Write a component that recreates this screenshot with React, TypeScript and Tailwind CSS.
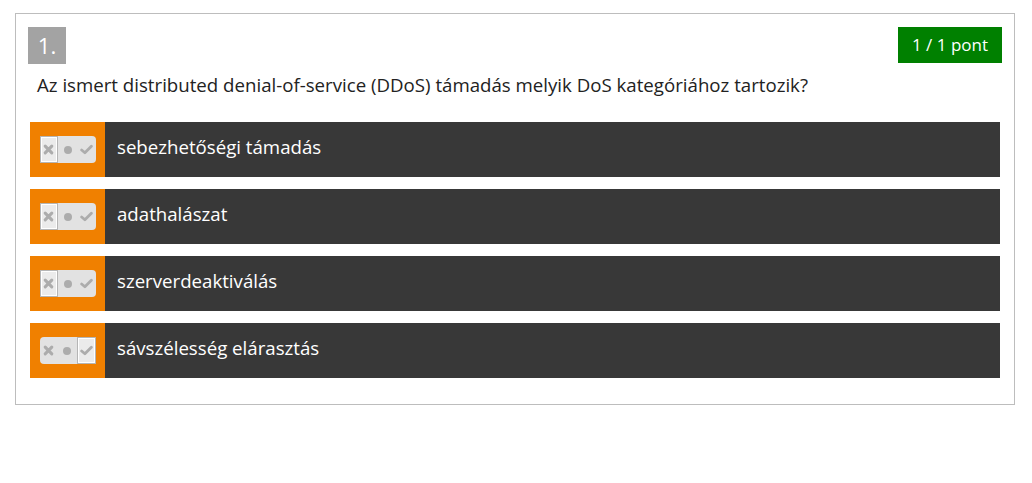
const answers = [
  { text: "sebezhetőségi támadás", pos: 0 },
  { text: "adathalászat", pos: 0 },
  { text: "szerverdeaktiválás", pos: 0 },
  { text: "sávszélesség elárasztás", pos: 2 },
];

const Cross = () => (
  <svg width="11" height="11" viewBox="0 0 10 10">
    <path d="M2 2 L8 8 M8 2 L2 8" stroke="#acacac" strokeWidth="2.8" strokeLinecap="round" />
  </svg>
);

const Dot = () => (
  <svg width="10" height="10" viewBox="0 0 10 10">
    <circle cx="5" cy="5" r="4" fill="#acacac" />
  </svg>
);

const Check = () => (
  <svg width="13" height="11" viewBox="0 0 12 10">
    <path d="M1.5 5.5 L4.5 8 L10.5 2" stroke="#acacac" strokeWidth="2.6" fill="none" strokeLinecap="round" strokeLinejoin="round" />
  </svg>
);

const Toggle = ({ pos }: { pos: number }) => {
  const icons = [<Cross key="x" />, <Dot key="d" />, <Check key="c" />];
  return (
    <div className="flex h-[27px] w-[56px] rounded-[4px] bg-[#e2e2e2]">
      {icons.map((icon, i) => (
        <div
          key={i}
          className={
            i === pos
              ? "flex h-full w-[19px] items-center justify-center border border-[#b5b5b5] bg-[#ebebeb] shadow-[inset_0_0_0_1px_#fff]"
              : "flex h-full w-[19px] items-center justify-center"
          }
        >
          {icon}
        </div>
      ))}
    </div>
  );
};

const App = () => {
  return (
    <div className="bg-white w-[1032px] h-[483px] pt-[13px] pl-[15px] font-['Open_Sans',sans-serif]">
      <div className="w-[1000px] h-[392px] border border-[#bdbdbd] pt-[13px]">
        <div className="flex items-start justify-between px-[12px]">
          <div className="flex h-[37px] w-[38px] items-center justify-center bg-[#a3a3a3] text-[22px] text-white">
            1.
          </div>
          <div className="flex h-[36px] w-[104px] items-center justify-center bg-[#008000] text-[17px] text-white">
            1 / 1 pont
          </div>
        </div>
        <p className="mt-[8px] pl-[21px] text-[18.67px] leading-[26px] text-[#222]">
          Az ismert distributed denial-of-service (DDoS) támadás melyik DoS kategóriához tartozik?
        </p>
        <div className="mt-[24px] flex flex-col gap-[12px] px-[14px]">
          {answers.map(a => (
            <div key={a.text} className="flex h-[55px]">
              <div className="flex w-[75px] items-center justify-center bg-[#f08000]">
                <Toggle pos={a.pos} />
              </div>
              <div className="flex flex-1 items-center bg-[#383838] pb-[5px] pl-[12px] text-[18.67px] text-white">
                {a.text}
              </div>
            </div>
          ))}
        </div>
      </div>
    </div>
  );
};

export default App;
